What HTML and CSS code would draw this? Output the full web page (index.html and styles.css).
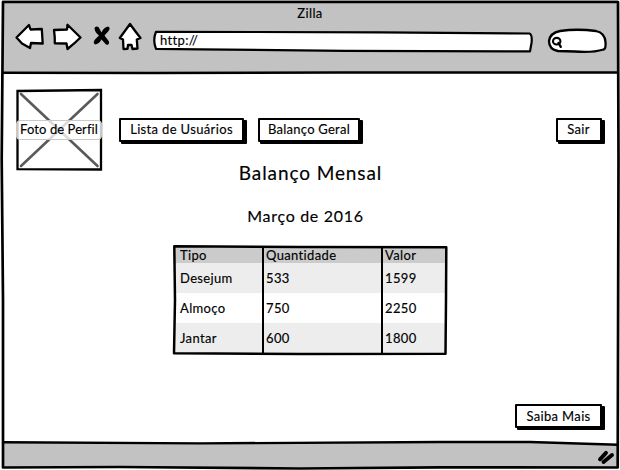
FILE: index.html
```html
<!DOCTYPE html>
<html lang="pt-BR">
<head>
<meta charset="utf-8">
<title>Zilla</title>
<link rel="stylesheet" href="styles.css">
</head>
<body>
<div class="window">
  <header class="chrome">
    <div class="title">Zilla</div>
    <div class="toolbar">
      <svg class="nav-icons" width="136" height="34" viewBox="10 20 136 34">
        <g fill="#fff" stroke="#000" stroke-width="2.3" stroke-linejoin="round">
          <path d="M16.500 37.500L29 25L30.500 29.500L41.800 29L42.700 43.500L31 43L30 48L22 43.500Z"/>
          <path d="M80.500 37.500L67.500 24.700L67 29.500L54 30Q55 37 54.800 43.300L66.500 43.500L67.500 49Q75 43 80.500 37.500Z"/>
          <path d="M130 24L119.800 38L123 39.500L123.500 49L127.500 48.800L128 45L131.500 45L132.500 49L137.500 48.500L136.800 39.500L140.500 38Q135 31 130 24Z"/>
        </g>
        <path d="M94.500 28Q95.500 25.500 98.500 27L101.500 32.500Q103.500 27.500 108 26.500Q111 28 108.500 31L104.500 35.500L109 41.500Q109.500 45.500 106 44.500L101.500 39.500Q99 44 95 44.500Q92.500 42.500 95 39.500L99 35.500Q94.500 32 94.500 28Z"/>
      </svg>
      <div class="address">
        <svg class="outline" width="381" height="24" viewBox="153 30 381 24"><path d="M156 31.800L380 32.300L529.500 33.500Q532.500 35 531.500 43L530 51.400L345 50.800L200 49.300L156 48.800Q152.500 40 156 31.800Z" fill="#fff" stroke="#000" stroke-width="2.200" stroke-linejoin="round"/></svg>
        <span class="url">http://</span>
      </div>
      <svg class="search" width="62" height="26" viewBox="547 28 62 26">
        <path d="M560 31Q577 28.500 596 31Q605 33 605.500 42Q606 49 603.500 49.500Q592 53 575 51.500L558 51Q549 49.500 549 41Q550 33 560 31Z" fill="#fff" stroke="#000" stroke-width="2.300"/>
        <ellipse cx="556.700" cy="41.200" rx="3.700" ry="3.300" fill="none" stroke="#000" stroke-width="2.100"/>
        <path d="M558.500 43L560.800 46.800" stroke="#000" stroke-width="2.400" stroke-linecap="round"/>
      </svg>
    </div>
  </header>

  <main class="page">
    <div class="top">
      <div class="photo">
        <svg class="outline" width="88" height="84" viewBox="15 88 88 84">
          <path d="M17.500 91L60 90.500L101 90L101 169.500L17.500 169.200Z" fill="#fff" stroke="#000" stroke-width="2.300"/>
          <path d="M21 94L97.500 166M97.500 94L21 166" stroke="#5a5a5a" stroke-width="2.600" stroke-linecap="round"/>
        </svg>
        <span class="photo-label">Foto de Perfil</span>
      </div>
      <nav class="actions">
        <a class="button users">Lista de Usuários</a>
        <a class="button balance">Balanço Geral</a>
        <a class="button exit">Sair</a>
      </nav>
    </div>
    <h1>Balanço Mensal</h1>
    <h2>Março de 2016</h2>
    <div class="table-box">
      <table>
        <thead><tr><th>Tipo</th><th class="wide">Quantidade</th><th>Valor</th></tr></thead>
        <tbody>
          <tr><td>Desejum</td><td>533</td><td>1599</td></tr>
          <tr><td>Almoço</td><td>750</td><td>2250</td></tr>
          <tr><td>Jantar</td><td>600</td><td>1800</td></tr>
        </tbody>
      </table>
      <svg class="outline" width="276" height="112" viewBox="172 244 276 112" fill="none" stroke="#000">
        <path d="M174.300 246.300L300 247L446.300 247.200L446 300L445.500 353.800L300 354L174 353.200L175 300Z" stroke-width="2.500" stroke-linejoin="round"/>
        <path d="M263 247V353M382 247V354" stroke-width="2"/>
      </svg>
    </div>
    <a class="button more">Saiba Mais</a>
  </main>

  <svg class="frame" width="620" height="470" viewBox="0 0 620 470">
    <path d="M2 441.500L200 443L490 442L618 444.500V467.500H3Z" fill="#c2c2c2"/>
    <g fill="none" stroke="#000">
      <path d="M3 2H618L618.500 160L617.700 467.500L440 467.300L300 468.500L120 467L3 467.500L3 300L1.700 160Z" stroke-width="2.700" stroke-linejoin="round"/>
      <path d="M3 72.700L150 73L340 72.500L618 72.500M3 442.300L200 443.400L440 442L530 442L618 444.800" stroke-width="2.400"/>
      <path d="M600 459.300L606 452.900M603.500 462L612 455" stroke-width="3.900" stroke-linecap="round"/>
    </g>
  </svg>
</div>
</body>
</html>
```
FILE: styles.css
```css
* { box-sizing: border-box; }
body {
  margin: 0;
  background: #fff;
  color: #000;
  font: 13px/16px Lato, "Open Sans", sans-serif;
  letter-spacing: 0.35px;
  -webkit-text-stroke: 0.15px #000;
}
.window {
  position: relative;
  width: 620px;
  height: 470px;
  overflow: hidden;
}
.frame { position: absolute; inset: 0; pointer-events: none; }
.outline { position: absolute; left: 0; top: 0; z-index: -1; }
.chrome { height: 73px; margin: 0 2px; padding-top: 5px; background: #c2c2c2; }
.title { text-align: center; height: 15px; }
.toolbar { display: flex; padding-left: 8px; }
.nav-icons { flex: none; }
.address {
  position: relative;
  z-index: 0;
  width: 381px;
  height: 24px;
  margin: 10px 0 0 7px;
  padding: 2px 7px;
}
.search { margin: 8px 0 0 13px; }
.page { display: flex; flex-direction: column; height: 397px; padding: 15px 16px 0 15px; }
.top { display: flex; height: 84px; }
.photo { position: relative; z-index: 0; width: 88px; padding-top: 32px; }
.photo-label {
  display: block;
  height: 20px;
  margin-left: 1px;
  width: 86px;
  line-height: 17px;
  text-align: center;
  white-space: nowrap;
  letter-spacing: 0.08px;
  background: rgba(255, 255, 255, .78);
  border: 1px solid #c9c9c9;
  border-radius: 4px;
}
.actions { display: flex; flex: 1; padding: 30px 0 0 16px; gap: 14px; }
.button {
  height: 24px;
  background: #fff;
  border: 2px solid #000;
  border-radius: 1px;
  box-shadow: 3px 2px #000, 2px 2px #000;
  line-height: 19px;
  text-align: center;
  white-space: nowrap;
}
.users { width: 125px; }
.balance { width: 102px; letter-spacing: 0.25px; }
.exit { width: 46px; margin-left: auto; margin-right: 2px; padding-right: 1px; }
h1, h2 { margin: 0; font-weight: 400; text-align: center; }
h1 { font-size: 19px; line-height: 24px; margin-top: -11px; padding-left: 2px; letter-spacing: 0.9px; }
h2 { font-size: 16px; line-height: 20px; margin-top: 21px; padding-right: 8px; letter-spacing: 0.7px; }
.table-box { position: relative; z-index: 0; width: 276px; height: 112px; margin: 18px 0 0 157px; padding: 2px; }
.table-box .outline { z-index: 1; }
table { width: 271px; border-collapse: collapse; table-layout: fixed; }
th, td { padding: 0 0 0 4px; text-align: left; font-weight: 400; }
th:first-child, td:first-child { padding-left: 6px; width: 88px; }
.wide { width: 119px; }
th { height: 17px; padding-top: 1px; background: #cbcbcb; line-height: 16px; }
td { height: 30px; }
tbody tr:nth-child(odd) { background: #ededed; }
.more { width: 87px; margin: 48px 0 0 500px; line-height: 20px; }
```
